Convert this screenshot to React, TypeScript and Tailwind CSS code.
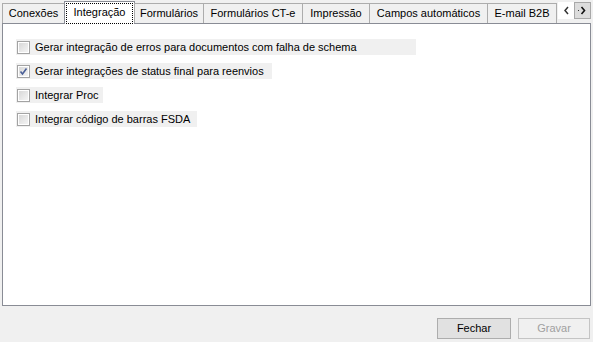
import { useState } from 'react';

const tabs = [
  { label: 'Conexões', w: 'w-[63px]' },
  { label: 'Integração', w: 'w-[71px]' },
  { label: 'Formulários', w: 'w-[70px]' },
  { label: 'Formulários CT-e', w: 'w-[100px]' },
  { label: 'Impressão', w: 'w-[68px]' },
  { label: 'Campos automáticos', w: 'w-[119px]' },
  { label: 'E-mail B2B', w: 'w-[70px]' },
];

const options = [
  { label: 'Gerar integração de erros para documentos com falha de schema', checked: false, w: 'w-[400px]' },
  { label: 'Gerar integrações de status final para reenvios', checked: true, w: 'w-[256px]' },
  { label: 'Integrar Proc', checked: false, w: 'w-[87px]' },
  { label: 'Integrar código de barras FSDA', checked: false, w: 'w-[181px]' },
];

function CheckBox({ checked }: { checked: boolean }) {
  return (
    <span className="w-[13px] h-[13px] border border-[#a3a3a3] bg-white p-px flex shrink-0">
      <span className="flex-1 bg-gradient-to-br from-[#d8d8d8] to-[#f4f4f4] flex items-center justify-center">
        {checked && (
          <svg width="9" height="9" viewBox="0 0 9 9">
            <path d="M1.5 4.5 L3.5 7 L7.5 1.5" fill="none" stroke="#4a5f97" strokeWidth="1.6" />
          </svg>
        )}
      </span>
    </span>
  );
}

export default function App() {
  const [state, setState] = useState(options.map((o) => o.checked));
  const active = 1;

  return (
    <div className="w-[593px] h-[342px] bg-[#f0f0f0] pt-px px-[2px] text-[11px] text-black overflow-hidden" style={{ fontFamily: '"Liberation Sans", Arial, sans-serif' }}>
      <div className="flex items-end h-[22px] pl-px relative z-10">
        {tabs.map((t, i) =>
          i === active ? (
            <div key={t.label} className={`${t.w} h-[23px] -mb-px -ml-px bg-white border border-b-0 border-[#898c95] flex pt-px px-px shrink-0`}>
              <span className="flex-1 h-[21px] border border-dotted border-black flex items-center justify-center pb-[2px]">{t.label}</span>
            </div>
          ) : (
            <div key={t.label} className={`${t.w} h-[20px] -ml-px bg-[#f0f0f0] border border-b-0 border-[#acacac] flex items-center justify-center pb-px shrink-0 whitespace-nowrap overflow-hidden`}>
              {t.label}
            </div>
          )
        )}
        <div className="flex items-start h-[20px] ml-auto mb-[1px] shrink-0">
          <div className="w-[16px] h-[17px] bg-white flex items-center justify-center">
            <svg width="7" height="9" viewBox="0 0 7 9">
              <path d="M5 1 L2 4.5 L5 8" fill="none" stroke="#333" strokeWidth="1.5" />
            </svg>
          </div>
          <div className="w-[17px] h-[17px] bg-[#dcdcdc] border border-[#a8a8a8] flex items-center justify-center">
            <svg width="9" height="9" viewBox="0 0 9 9">
              <rect x="0" y="4" width="1" height="1" fill="#333" />
              <path d="M3.5 1 L6.5 4.5 L3.5 8" fill="none" stroke="#111" strokeWidth="1.6" />
            </svg>
          </div>
        </div>
      </div>
      <div className="h-[283px] bg-white border border-[#898c95] pt-[15px] pl-[13px] flex flex-col gap-[8px]">
        {options.map((o, i) => (
          <label
            key={o.label}
            className={`${o.w} h-[16px] bg-[#f0f0f0] flex items-center gap-[5px] pl-px`}
            onClick={() => setState((s) => s.map((v, j) => (j === i ? !v : v)))}
          >
            <CheckBox checked={state[i]} />
            <span className="whitespace-nowrap">{o.label}</span>
          </label>
        ))}
      </div>
      <div className="flex justify-end gap-[7px] mt-[12px] pr-px">
        <button className="w-[74px] h-[21px] bg-[#e1e1e1] border border-[#adadad] text-[11px] text-black">Fechar</button>
        <button className="w-[72px] h-[21px] bg-[#f0f0f0] border border-[#c4c4c4] text-[11px] text-[#a0a0a0]">Gravar</button>
      </div>
    </div>
  );
}
